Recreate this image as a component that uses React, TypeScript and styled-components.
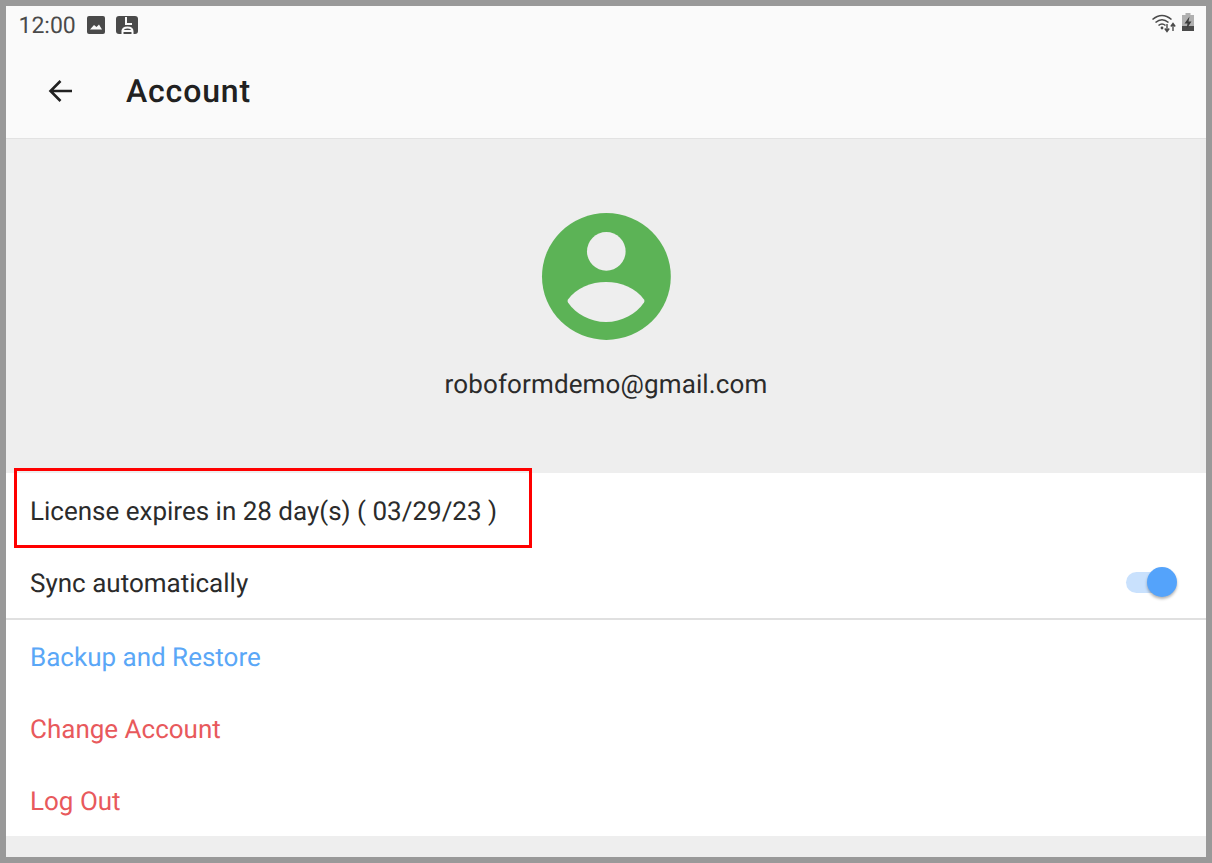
import React from 'react';
import styled, { createGlobalStyle } from 'styled-components';

const GlobalStyle = createGlobalStyle`
  html, body {
    margin: 0;
    padding: 0;
    background: #999999;
  }
  body {
    font-family: Roboto, "Liberation Sans", sans-serif;
    text-rendering: geometricPrecision;
  }
`;

const App = () => {
  return (
    <>
      <GlobalStyle />
      <Frame>
        <StatusBar>
          <StatusLeft>
            <Clock>12:00</Clock>
            <svg width="20" height="20" viewBox="0 0 20 20">
              <rect x="1" y="1" width="18" height="18" rx="2" fill="#4a4a4a" />
              <path d="M4 14.5 L8 10 L10.5 12 L13 9.5 L16 14.5 Z" fill="#fafafa" />
            </svg>
            <svg width="24" height="20" viewBox="0 0 24 20">
              <rect x="1" y="1" width="22" height="18" rx="3" fill="#4a4a4a" />
              <path d="M11 2 V9 H17" fill="none" stroke="#fafafa" strokeWidth="2" />
              <path d="M6.5 16 H18 M7.5 19 V16.5 Q7.5 12.5 12.5 12.5 Q17.5 12.5 17.5 16.5 V19" fill="none" stroke="#fafafa" strokeWidth="2" />
            </svg>
          </StatusLeft>
          <StatusRight>
            <svg width="26" height="20" viewBox="0 0 26 20">
              <path d="M1.5 6.5 Q11 -1.5 20.5 6.5" fill="none" stroke="#4a4a4a" strokeWidth="1.6" />
              <path d="M4.5 9.5 Q11 4 17.5 9.5" fill="none" stroke="#4a4a4a" strokeWidth="1.6" />
              <path d="M7.5 12.5 Q11 9.5 14.5 12.5" fill="none" stroke="#4a4a4a" strokeWidth="1.6" />
              <circle cx="11" cy="15" r="1.4" fill="#4a4a4a" />
              <path d="M16 11 V18 M13.8 15.5 L16 18.5 L18.2 15.5" fill="none" stroke="#4a4a4a" strokeWidth="1.4" />
              <path d="M22 18 V11 M19.8 13.5 L22 10.5 L24.2 13.5" fill="none" stroke="#4a4a4a" strokeWidth="1.4" />
            </svg>
            <svg width="14" height="20" viewBox="0 0 14 20">
              <rect x="4.5" y="0" width="5" height="3" fill="#b0b0b0" />
              <rect x="1" y="2" width="12" height="11" fill="#b0b0b0" />
              <rect x="1" y="13" width="12" height="5" fill="#4a4a4a" />
              <path d="M8.5 3.5 L3.5 10.5 H6.5 L5.5 16 L10.5 8.5 H7.5 Z" fill="#3c3c3c" />
            </svg>
          </StatusRight>
        </StatusBar>
        <AppBar>
          <BackButton>
            <svg width="32" height="32" viewBox="0 0 32 32">
              <path d="M27 16 H6 M15.5 6 L5.5 16 L15.5 26" fill="none" stroke="#212121" strokeWidth="2.6" />
            </svg>
          </BackButton>
          <Title>Account</Title>
        </AppBar>
        <Hero>
          <svg width="130" height="128" viewBox="0 0 130 128">
            <ellipse cx="65.4" cy="63.5" rx="64.4" ry="63.4" fill="#5cb356" />
            <circle cx="65.3" cy="38.4" r="19.3" fill="#eeeeee" />
            <path
              d="M27 89.5 Q26 88 27 86.5 C35 75 50 69 65 69 C80 69 95 75 103 86.5 Q104 88 103 89.5 C95 101 81 109 65 109 C49 109 35 101 27 89.5 Z"
              fill="#eeeeee"
            />
          </svg>
          <Email>roboformdemo@gmail.com</Email>
        </Hero>
        <Section>
          <Row $height={74}>
            <RowText>License expires in 28 day(s) ( 03/29/23 )</RowText>
            <Highlight />
          </Row>
          <Row $height={71}>
            <RowText>Sync automatically</RowText>
            <Switch>
              <SwitchThumb />
            </Switch>
          </Row>
        </Section>
        <Section $divided>
          <Row>
            <RowText $color="#5aa7f7">Backup and Restore</RowText>
          </Row>
          <Row>
            <RowText $color="#e8595c">Change Account</RowText>
          </Row>
          <Row>
            <RowText $color="#e8595c">Log Out</RowText>
          </Row>
        </Section>
        <Footer />
      </Frame>
    </>
  );
};

export default App;

const Frame = styled.div`
  box-sizing: border-box;
  width: 1212px;
  height: 863px;
  border: 6px solid #999999;
  display: flex;
  flex-direction: column;
  background: #eeeeee;
  overflow: hidden;
`;

const StatusBar = styled.div`
  height: 38px;
  padding: 0 11px 0 12.5px;
  display: flex;
  align-items: center;
  justify-content: space-between;
  background: #fafafa;
`;

const StatusLeft = styled.div`
  display: flex;
  align-items: center;
  gap: 9px;
`;

const StatusRight = styled.div`
  display: flex;
  align-items: center;
  gap: 4px;
  margin-top: -4px;
`;

const Clock = styled.span`
  font-size: 23px;
  color: #4a4a4a;
  margin-right: 1px;
`;

const AppBar = styled.div`
  height: 94px;
  display: flex;
  align-items: center;
  background: #fafafa;
  border-bottom: 1px solid #e2e2e2;
`;

const BackButton = styled.div`
  display: flex;
  margin-left: 39px;
  margin-right: 49px;
`;

const Title = styled.div`
  font-size: 32px;
  font-weight: 500;
  color: #212121;
  letter-spacing: 0.85px;
`;

const Hero = styled.div`
  height: 334px;
  box-sizing: border-box;
  padding-top: 74px;
  display: flex;
  flex-direction: column;
  align-items: center;
`;

const Email = styled.div`
  margin-top: 27px;
  font-size: 26px;
  line-height: 34px;
  color: #2b2b2b;
  letter-spacing: 0.13px;
`;

const Section = styled.div<{ $divided?: boolean }>`
  background: #ffffff;
  border-top: ${(props) => (props.$divided ? '2px solid #e0e0e0' : 'none')};
`;

const Row = styled.div<{ $height?: number }>`
  position: relative;
  box-sizing: border-box;
  height: ${(props) => props.$height || 72}px;
  padding: 3px 36px 0 24px;
  display: flex;
  align-items: center;
  justify-content: space-between;
`;

const RowText = styled.span<{ $color?: string }>`
  font-size: 26px;
  line-height: 30px;
  color: ${(props) => props.$color || '#2b2b2b'};
`;

const Highlight = styled.div`
  position: absolute;
  left: 8px;
  top: -5px;
  width: 518px;
  height: 80px;
  box-sizing: border-box;
  border: 3px solid #ff0000;
`;

const Switch = styled.div`
  position: relative;
  width: 44px;
  height: 21px;
  margin-top: -3px;
  border-radius: 11px;
  background: #c9e1fd;
`;

const SwitchThumb = styled.div`
  position: absolute;
  right: -7px;
  top: -5px;
  width: 30px;
  height: 30px;
  border-radius: 50%;
  background: #54a3fb;
  box-shadow: 0 2px 3px rgba(0, 0, 0, 0.3);
`;

const Footer = styled.div`
  flex: 1;
  background: #eeeeee;
`;
